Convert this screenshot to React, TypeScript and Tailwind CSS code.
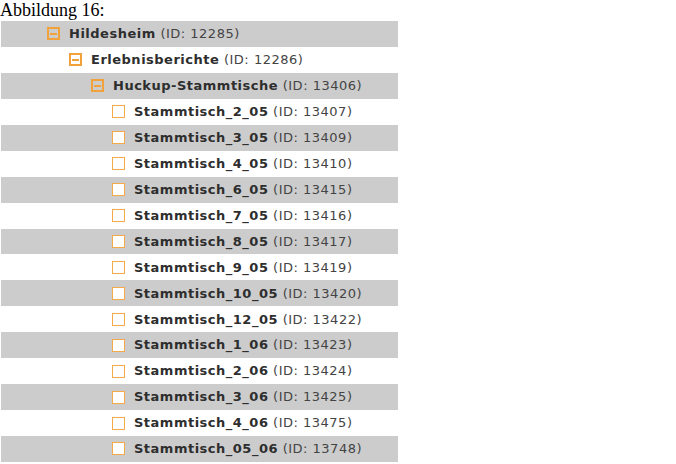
const rows: { level: number; name: string; id: number; open?: boolean }[] = [
  { level: 0, name: "Hildesheim", id: 12285, open: true },
  { level: 1, name: "Erlebnisberichte", id: 12286, open: true },
  { level: 2, name: "Huckup-Stammtische", id: 13406, open: true },
  { level: 3, name: "Stammtisch_2_05", id: 13407 },
  { level: 3, name: "Stammtisch_3_05", id: 13409 },
  { level: 3, name: "Stammtisch_4_05", id: 13410 },
  { level: 3, name: "Stammtisch_6_05", id: 13415 },
  { level: 3, name: "Stammtisch_7_05", id: 13416 },
  { level: 3, name: "Stammtisch_8_05", id: 13417 },
  { level: 3, name: "Stammtisch_9_05", id: 13419 },
  { level: 3, name: "Stammtisch_10_05", id: 13420 },
  { level: 3, name: "Stammtisch_12_05", id: 13422 },
  { level: 3, name: "Stammtisch_1_06", id: 13423 },
  { level: 3, name: "Stammtisch_2_06", id: 13424 },
  { level: 3, name: "Stammtisch_3_06", id: 13425 },
  { level: 3, name: "Stammtisch_4_06", id: 13475 },
  { level: 3, name: "Stammtisch_05_06", id: 13748 },
];

const indent = ["pl-[46px]", "pl-[68px]", "pl-[90px]", "pl-[111px]"];

function MinusBox() {
  return (
    <span className="flex h-[13px] w-[13px] shrink-0 items-center justify-center border-2 border-[#f2a23a]">
      <span className="h-[2px] w-[7px] bg-[#f2a23a]" />
    </span>
  );
}

function EmptyBox() {
  return <span className="h-[13px] w-[13px] shrink-0 border-[1.5px] border-[#f4aa48] bg-white" />;
}

export default function App() {
  return (
    <div className="h-[464px] w-[676px] bg-white">
      <div className="h-[21px] font-['Liberation_Serif',serif] text-[18px] leading-[20px] text-black">
        Abbildung 16:
      </div>
      <ul className="w-[398px] pl-[1px] font-['DejaVu_Sans',Verdana,sans-serif] text-[13px] tracking-[0.5px]">
        {rows.map((r, i) => (
          <li
            key={r.id}
            className={`flex h-[25.94px] items-center gap-[9px] ${indent[r.level]} ${
              i % 2 === 0 ? "bg-[#cccccc]" : "bg-white"
            }`}
          >
            {r.open ? <MinusBox /> : <EmptyBox />}
            <span className="whitespace-nowrap">
              <b className="font-bold text-[#2e2e2e]">{r.name}</b>{" "}
              <span className="text-[#444444]">(ID: {r.id})</span>
            </span>
          </li>
        ))}
      </ul>
    </div>
  );
}
